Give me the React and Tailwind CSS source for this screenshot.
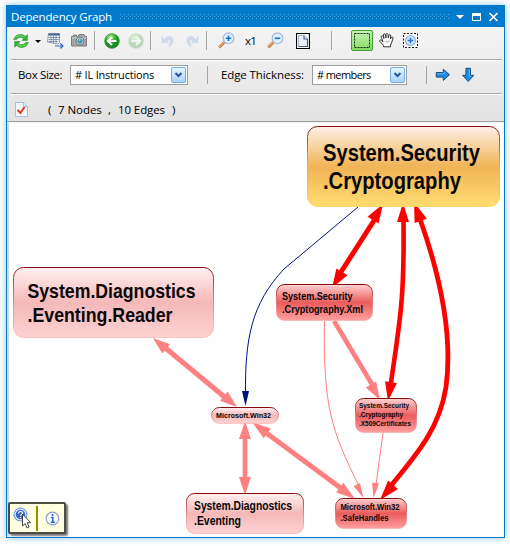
import React from 'react';

const UI = "font-['Open_Sans','Noto_Sans',sans-serif]";

function VSep({ className }) {
  return <div className={`w-px shrink-0 bg-[#a6a6a6] ${className}`} />;
}

function RefreshIcon({ className }) {
  return (
    <svg viewBox="0 0 16 16" className={`size-4 shrink-0 ${className}`}>
      <g fill="#2fb235" stroke="#178a20" strokeWidth=".5">
        <path d="M.6 6.600C2 2.600 5 1.400 7.700 1.500c2 .1 3.500.9 4.600 2l2.100-1.700v5.600H9l1.700-1.800C9.200 4.300 5.600 3.300 3.400 6.600z" />
        <path d="M15.400 9.400C14 13.400 11 14.600 8.300 14.500c-2-.1-3.500-.9-4.600-2l-2.100 1.700V8.600H7l-1.700 1.800c1.500 1.300 5.100 2.300 7.300-1z" />
      </g>
      <path d="M2 5.500C4 2.500 8 1.600 11.800 4.700M14 10.500c-2.200 3-6.500 3.500-9.700 1" fill="none" stroke="#8be37e" strokeWidth=".9" />
    </svg>
  );
}

function ExportGridIcon({ className }) {
  return (
    <svg viewBox="0 0 17 16" className={`h-4 w-[17px] shrink-0 ${className}`}>
      <path d="M1.500.5h11v9l-1.500 1.500-3-.5-7.500-1.500z" fill="#f5f8fc" stroke="#7d8ca1" strokeWidth=".8" />
      <path d="M1.500.5h11v2h-11z" fill="#3c5f96" />
      <path d="M4 1v9M6.500 1v9.500M9 1v10M1.500 4.500h11M1.500 6.500h11M1.500 8.500h10" stroke="#6e84a3" strokeWidth=".8" />
      <path d="M8 13h8M13.300 10.500l2.700 2.500-2.700 2.500" fill="none" stroke="#2d68ca" strokeWidth="1.200" />
    </svg>
  );
}

function CameraIcon({ className }) {
  return (
    <svg viewBox="0 0 16 13" className={`h-[13px] w-4 shrink-0 ${className}`}>
      <path d="M.5 2.500h2V1h3v1.500h1.500L8 .5h5l1 2h1.500v9.500H.5z" fill="#a3a5a6" stroke="#7d7d7d" />
      <path d="M1 4h14" stroke="#d7d7d7" />
      <circle cx="9" cy="7" r="4" fill="#dce6ea" stroke="#717779" />
      <circle cx="9" cy="7" r="2.300" fill="#43a5ca" stroke="#356b82" strokeWidth=".7" />
      <path d="M8 6.300l1.300-.8" stroke="white" />
    </svg>
  );
}

function NavIcon({ forward = false, className }) {
  return (
    <svg viewBox="0 0 16 16" className={`size-4 shrink-0 ${forward ? 'opacity-25' : ''} ${className}`}>
      <defs>
        <radialGradient id={forward ? 'navF' : 'navB'} cx=".4" cy=".25">
          <stop stopColor="#b2ed8d" />
          <stop offset=".55" stopColor="#4fbf40" />
          <stop offset="1" stopColor="#198c20" />
        </radialGradient>
      </defs>
      <circle cx="8" cy="8" r="7.300" fill={forward ? 'url(#navF)' : 'url(#navB)'} stroke="#23882a" strokeWidth=".7" />
      <path d={forward ? 'M3.500 8h8M8 4l4 4-4 4' : 'M12.500 8h-8M8 4L4 8l4 4'} fill="none" stroke="white" strokeWidth="2.200" />
    </svg>
  );
}

function UndoIcon({ redo = false, className }) {
  return (
    <svg viewBox="0 0 14 14" className={`size-[14px] shrink-0 ${className}`}>
      <g transform={redo ? 'translate(14 0) scale(-1 1)' : undefined}>
        <path d="M2.500 6C7 .5 13 2 12 7.500c-.4 2.400-2 4-4.500 5.200C10 9 10.500 4.500 6 6l1.500 2.500H1V2z" fill="#d0d9e8" stroke="#bccae0" strokeWidth=".5" />
      </g>
    </svg>
  );
}

function ZoomIcon({ out = false, className }) {
  return (
    <svg viewBox="0 0 17 17" className={`size-[17px] shrink-0 ${className}`}>
      <path d="M1.200 15.500l5.500-5.800" stroke="#b87945" strokeWidth="2.800" />
      <path d="M1.200 15l5-5.300" stroke="#f1a76a" strokeWidth="1.400" />
      <circle cx="10.500" cy="6.300" r="5.300" fill="#e2f2ff" stroke="#a6bfe9" strokeWidth="1.300" />
      <path d={out ? 'M7.700 6.300h5.600' : 'M7.700 6.300h5.600M10.500 3.500v5.600'} stroke="#1672d7" strokeWidth="1.600" />
    </svg>
  );
}

function PageIcon({ className }) {
  return (
    <svg viewBox="0 0 14 16" className={`h-4 w-[14px] shrink-0 ${className}`}>
      <path d="M.5.5h13v15H.5z" fill="#fff" stroke="#000" strokeWidth="1.200" />
      <path d="M2.500 2.500H8l3.500 3.500v7.500h-9z" fill="#e9f0f8" stroke="#a9b5c7" />
      <path d="M8 2.500V6h3.500M11.500 6v7.500h-9" fill="none" stroke="#4a5a78" strokeWidth="1.100" />
    </svg>
  );
}

function HandIcon({ className }) {
  return (
    <svg viewBox="0 0 15 15" className={`size-[15px] shrink-0 ${className}`}>
      <path d="M4.500 13.800v-1.500L1 8.500c-1-1.500.3-2 1.500-1.200L4 8.600 2.300 4.300C1.800 2.700 3.300 2 4 3.500l1 2-.6-3.500C4.300.6 6 .3 6.400 1.700L7 5V1.800C7-.1 9 .2 9.100 1.600L9.300 5l.6-2.500c.4-1.500 2-1 1.800.3L11.500 6l.8-1.500c.7-1.200 2.100-.5 1.700.8L12.500 10l-1 2v1.800z" fill="white" stroke="#333" />
      <path d="M5.500 8l1.500 1.500M7.500 7.500l1 2M10 7.500l-.5 2" stroke="#888" strokeWidth=".7" />
    </svg>
  );
}

function TargetIcon({ className }) {
  return (
    <svg viewBox="0 0 16 16" className={`size-4 shrink-0 ${className}`}>
      <path d="M.5.5h14v14H.5z" fill="white" stroke="#111" strokeDasharray="2 1.500" />
      <circle cx="7.500" cy="7.500" r="4.900" fill="#ddebff" stroke="#8fb3ed" strokeWidth="1.300" />
      <path d="M4.700 7.500h5.600M7.500 4.700v5.600" stroke="#2470dc" strokeWidth="1.500" />
    </svg>
  );
}

function ArrowIcon({ down = false, className }) {
  return (
    <svg viewBox="0 0 16 16" className={`size-4 shrink-0 ${className}`}>
      <path d="M1.300 5.500h7V2.200l6.200 5.600-6.200 5.600v-3.300h-7z" transform={down ? 'rotate(90 8 8)' : undefined} fill="#218bdc" stroke="#174d80" />
      <path d="M2 6.500h7.300V4.600" transform={down ? 'rotate(90 8 8)' : undefined} fill="none" stroke="#65baf1" strokeWidth=".8" />
    </svg>
  );
}

function Combo({ text, textClass, className }) {
  return (
    <div className={`flex h-5 shrink-0 items-center border border-[#9e9e9e] bg-white pr-px pl-1 ${className}`}>
      <span className={`${textClass} whitespace-nowrap text-[11px]`}>{text}</span>
      <div className="ml-auto flex h-4 w-[15px] items-center justify-center rounded-[2px] border border-[#75ade0] bg-linear-to-b from-[#e8f5ff] to-[#a9d3f8]">
        <svg viewBox="0 0 7 6" className="h-[6px] w-[7px]">
          <path d="M.5 1l3 3 3-3" fill="none" stroke="#275b9e" strokeWidth="2" />
        </svg>
      </div>
    </div>
  );
}

function TitleBar() {
  return (
    <div className="flex h-[21px] shrink-0 items-center bg-[#007acc] pl-[4px] text-white">
      <span className="w-[102px] shrink-0 whitespace-nowrap text-[11.5px] leading-[20px] tracking-[-0.17px]">Dependency Graph</span>
      <svg width="329" height="5" className="ml-[7px] shrink-0">
        <defs>
          <pattern id="grip" width="4" height="4" patternUnits="userSpaceOnUse">
            <path d="M0 0h1v1H0zM2 2h1v1H2z" fill="#59a8de" />
          </pattern>
        </defs>
        <rect width="329" height="5" fill="url(#grip)" />
      </svg>
      <svg width="43" height="12" className="ml-[7px] shrink-0">
        <path d="M0 4h8l-4 4z" fill="white" />
        <path d="M16.500 2.500h8v7h-8z" fill="none" stroke="white" />
        <path d="M16 2h9v3h-9z" fill="white" />
        <path d="M33.500 2l8 8M41.500 2l-8 8" stroke="white" strokeWidth="1.700" />
      </svg>
    </div>
  );
}

function Toolbars() {
  return (
    <div className="shrink-0 bg-linear-to-b from-[#f4f4f4] to-[#e2e2e2] text-[11.5px] text-black">
      <div className="flex h-[32px] items-center pr-[2px] pb-[5px] pl-[4px]">
        <RefreshIcon className="ml-[2px]" />
        <svg viewBox="0 0 6 3" className="mt-[2px] ml-[6px] h-[3px] w-[6px]"><path d="M0 0h6L3 3z" /></svg>
        <ExportGridIcon className="ml-[6px]" />
        <CameraIcon className="ml-[7px]" />
        <VSep className="ml-[7px] h-[19px]" />
        <NavIcon className="ml-[9px]" />
        <NavIcon forward className="ml-[8px]" />
        <VSep className="ml-[6px] h-[19px]" />
        <UndoIcon className="ml-[10px]" />
        <UndoIcon redo className="ml-[10px]" />
        <VSep className="ml-[7px] h-[19px]" />
        <ZoomIcon className="ml-[11px]" />
        <span className="ml-[10px] w-[12px] tracking-[-0.8px]">x1</span>
        <ZoomIcon out className="ml-[10px]" />
        <PageIcon className="ml-[12px]" />
        <VSep className="ml-[21px] h-[19px]" />
        <div className="ml-[19px] flex h-[21px] w-[22px] items-center justify-center rounded-[2px] border border-[#43a037] bg-linear-to-b from-[#c9f3b3] to-[#83dc62]">
          <svg width="16" height="15"><path d="M.5.5h15v14H.5z" fill="none" stroke="#142611" strokeDasharray="2 1" /></svg>
        </div>
        <HandIcon className="ml-[6px]" />
        <TargetIcon className="ml-[9px]" />
      </div>
      <div className="mr-[2px] ml-[4px] h-[2px] border-b border-white bg-[#a9a9a9]" />
      <div className="flex h-[32px] items-center pb-[4px] pl-[11px]">
        <span className="w-[45px] whitespace-nowrap tracking-[-0.35px]">Box Size:</span>
        <Combo className="ml-[7px] w-[118px]" text="# IL Instructions" textClass="tracking-[-0.2px]" />
        <VSep className="ml-[19px] h-[18px]" />
        <span className="ml-[13px] w-[84px] whitespace-nowrap tracking-[-0.1px]">Edge Thickness:</span>
        <Combo className="ml-[7px] w-[95px]" text="# members" textClass="tracking-[-0.6px]" />
        <VSep className="ml-[19px] h-[18px]" />
        <ArrowIcon className="ml-[8px]" />
        <ArrowIcon down className="ml-[9px]" />
      </div>
      <div className="mr-[2px] ml-[4px] h-[2px] border-b border-white bg-[#a9a9a9]" />
      <div className="flex h-[26px] items-center pl-[8px]">
        <svg width="13" height="15" className="mt-[3px] shrink-0">
          <path d="M.5.5h8l4 4v10H.5z" fill="#f3f8ff" stroke="#a8bddc" />
          <path d="M8.500.5v4h4" fill="#d6e4f8" stroke="#a8bddc" />
          <path d="M2.500 8l3 3 4-6" fill="none" stroke="#dd3c1b" strokeWidth="2" />
        </svg>
        <div className="ml-[20px] flex pt-[3px] leading-4">
          <span className="w-[10px]">(</span>
          <span className="w-[50px] whitespace-nowrap tracking-[-0.05px]">7 Nodes</span>
          <span className="w-[10px]">,</span>
          <span className="w-[54px] whitespace-nowrap tracking-[-0.1px]">10 Edges</span>
          <span>)</span>
        </div>
      </div>
      <div className="h-[2px] border-b border-[#f5f5f5] bg-[#9c9c9c]" />
    </div>
  );
}

const NODES = [
  { x: 307, y: 126, w: 193, h: 81, r: 10, fill: 'gold', size: 23, lines: [['System.Security', 323, 160.5, 157], ['.Cryptography', 323, 188.5, 138]] },
  { x: 13, y: 267, w: 201, h: 71, r: 10, fill: 'pink', size: 20.5, lines: [['System.Diagnostics', 27.5, 297.5, 168], ['.Eventing.Reader', 27.5, 322, 145]] },
  { x: 276, y: 284, w: 97, h: 37, r: 8, fill: 'red', size: 11, lines: [['System.Security', 282, 299.5, 70.5], ['.Cryptography.Xml', 282, 312.5, 81]] },
  { x: 355, y: 398, w: 62, h: 35, r: 8, fill: 'red', size: 7.5, lines: [['System.Security', 359, 408, 50], ['.Cryptography', 359, 417, 44], ['.X509Certificates', 359, 426, 52]] },
  { x: 211, y: 407, w: 68, h: 17, r: 8, fill: 'pink', size: 7.5, lines: [['Microsoft.Win32', 216, 418, 55]] },
  { x: 186, y: 493, w: 118, h: 41, r: 8, fill: 'pink', size: 12, lines: [['System.Diagnostics', 194, 509.5, 98], ['.Eventing', 194, 524.5, 47]] },
  { x: 335, y: 498, w: 72, h: 31, r: 8, fill: 'red', size: 8.8, lines: [['Microsoft.Win32', 340.5, 510, 59], ['.SafeHandles', 340.5, 521, 48]] },
];

const RED = '#ff0000';
const SALMON = '#ff8080';
const NAVY = '#00107f';

const EDGES = [
  { d: 'M163 346L227 399', c: SALMON, w: 5 },
  { d: 'M245 438V480', c: SALMON, w: 4.7 },
  { d: 'M265 432L342 489', c: SALMON, w: 5 },
  { d: 'M334 321L373 386', c: SALMON, w: 4.7 },
  { d: 'M324.500 321C323 405 331 430 359 486', c: SALMON, w: 1 },
  { d: 'M383 433L376 485', c: SALMON, w: 1 },
  { d: 'M358 207L284 269C251 304 245 340 245.500 394', c: NAVY, w: 1 },
  { d: 'M375 219L341 272', c: RED, w: 5 },
  { d: 'M403.500 220C404.500 300 400 320 390.500 386', c: RED, w: 4.6 },
  { d: 'M420 219C448 298 451 350 446 387C440 426 420 451 389 488', c: RED, w: 4.8 },
];

// Arrowheads: tip x, tip y, direction x, direction y, length, half width, colour.
const HEADS = [
  [153, 338, -84, -69, 17, 6, SALMON],
  [237, 407, 84, 69, 17, 6, SALMON],
  [245, 421, 0, -1, 18, 6, SALMON],
  [245, 495, 0, 1, 18, 6, SALMON],
  [252, 422, -100, -74, 19, 6, SALMON],
  [355, 499, 100, 74, 19, 6, SALMON],
  [380, 400, 45, 77, 18, 6, SALMON],
  [363.5, 498, 7, 14, 15, 3.5, SALMON],
  [373.5, 498, -9, 65, 15, 3.5, SALMON],
  [245.5, 406, 0, 1, 15, 3.5, NAVY],
  [383, 204, 48, -78, 19, 6.5, RED],
  [332, 288, -48, 78, 19, 6.5, RED],
  [403, 203, 0, -1, 19, 6, RED],
  [388, 401, -3, 19, 19, 6, RED],
  [414, 202, -28, -78, 20, 6.5, RED],
  [380, 500, -38, 44, 20, 6.5, RED],
];

function headPoints([x, y, dx, dy, len, half]) {
  const m = Math.hypot(dx, dy);
  const ux = dx / m;
  const uy = dy / m;
  const bx = x - ux * len;
  const by = y - uy * len;
  return `${x},${y} ${bx - uy * half},${by + ux * half} ${bx + uy * half},${by - ux * half}`;
}

const GRADIENTS = [
  ['gold', '#fff0e8', '#f1b456', '#f3b85a', '#ffdc70'],
  ['pink', '#fff1f1', '#f5b8b8', '#f5bcbc', '#ffd2d2'],
  ['red', '#ffd2d2', '#eb5c5c', '#ee6464', '#ffa0a0'],
];

function Graph() {
  return (
    <svg viewBox="9 123 494 414" className="block h-[414px] w-[494px] shrink-0">
      <defs>
        {GRADIENTS.map(([id, a, b, c, d]) => (
          <linearGradient key={id} id={id} x1="0" y1="0" x2="0" y2="1">
            <stop stopColor={a} />
            <stop offset=".5" stopColor={b} />
            <stop offset=".56" stopColor={c} />
            <stop offset="1" stopColor={d} />
          </linearGradient>
        ))}
        <linearGradient id="rim" x1="0" y1="0" x2="0" y2="1">
          <stop stopColor="#850c0c" />
          <stop offset=".12" stopColor="#a63232" />
          <stop offset=".5" stopColor="#d77070" stopOpacity=".75" />
          <stop offset="1" stopColor="#ffaaaa" stopOpacity=".6" />
        </linearGradient>
        <linearGradient id="goldRim" x1="0" y1="0" x2="0" y2="1">
          <stop stopColor="#850c0c" />
          <stop offset=".12" stopColor="#a8442a" />
          <stop offset=".5" stopColor="#dd9550" stopOpacity=".7" />
          <stop offset="1" stopColor="#ffd568" />
        </linearGradient>
      </defs>
      {EDGES.map((e) => <path key={e.d} d={e.d} fill="none" stroke={e.c} strokeWidth={e.w} />)}
      {HEADS.map((h) => <polygon key={`${h[0]}-${h[1]}`} points={headPoints(h)} fill={h[6]} />)}
      {NODES.map((n) => (
        <g key={`${n.x}-${n.y}`}>
          <rect x={n.x + 0.5} y={n.y + 0.5} width={n.w - 1} height={n.h - 1} rx={n.r} fill={`url(#${n.fill})`} stroke={n.fill === 'gold' ? 'url(#goldRim)' : 'url(#rim)'} />
          {n.lines.map(([t, x, y, w]) => (
            <text key={t} x={x} y={y} textLength={w} lengthAdjust="spacingAndGlyphs" fontSize={n.size} className="font-['Liberation_Sans',sans-serif] font-bold" fill="#080808">{t}</text>
          ))}
        </g>
      ))}
    </svg>
  );
}

function HelpPopup() {
  return (
    <div className="absolute bottom-[3px] left-[1px] flex h-[32px] w-[58px] items-center rounded-[2px] border-2 border-[#4c4c43] bg-[#ffffe1] shadow-[2px_2px_2px_#777]">
      <svg width="20" height="24" className="ml-[3px] shrink-0">
        <circle cx="7.500" cy="8.500" r="6.500" fill="#dbe8ff" stroke="#5f89db" />
        <circle cx="7.500" cy="8.500" r="4.700" fill="#2f66cf" />
        <path d="M5.500 7.500c0-3 4.500-2.500 4 0-.3 1.200-2 1-2 2.500M7.500 11v1" fill="none" stroke="white" strokeWidth="1.200" />
        <path d="M9.500 8v12l2.600-2.500 2 4.500 2-1-2-4.300h3.600z" fill="white" stroke="#2e3440" strokeWidth=".9" />
      </svg>
      <div className="ml-[3px] h-[25px] w-[2px] shrink-0 bg-[#929000]" />
      <svg width="15" height="15" className="ml-[7px] shrink-0">
        <circle cx="7.500" cy="7.500" r="6.300" fill="#fbfcff" stroke="#8fa1c9" strokeWidth="1.200" />
        <path d="M7.500 3v2M6 6.500h1.800V11M5.800 11.300h4" fill="none" stroke="#2463cc" strokeWidth="1.600" />
      </svg>
    </div>
  );
}

export default function App() {
  return (
    <div className={`h-[546px] w-[510px] overflow-hidden bg-white pt-[5px] pl-[6px] ${UI}`}>
      <div className="relative flex h-[533px] w-[499px] flex-col border border-[#007acc] bg-white shadow-[0_0_7px_#8cc5ea]">
        <TitleBar />
        <Toolbars />
        <div className="flex min-h-0 flex-1 border-l-2 border-[#d5dbe2]">
          <Graph />
        </div>
        <HelpPopup />
      </div>
    </div>
  );
}
